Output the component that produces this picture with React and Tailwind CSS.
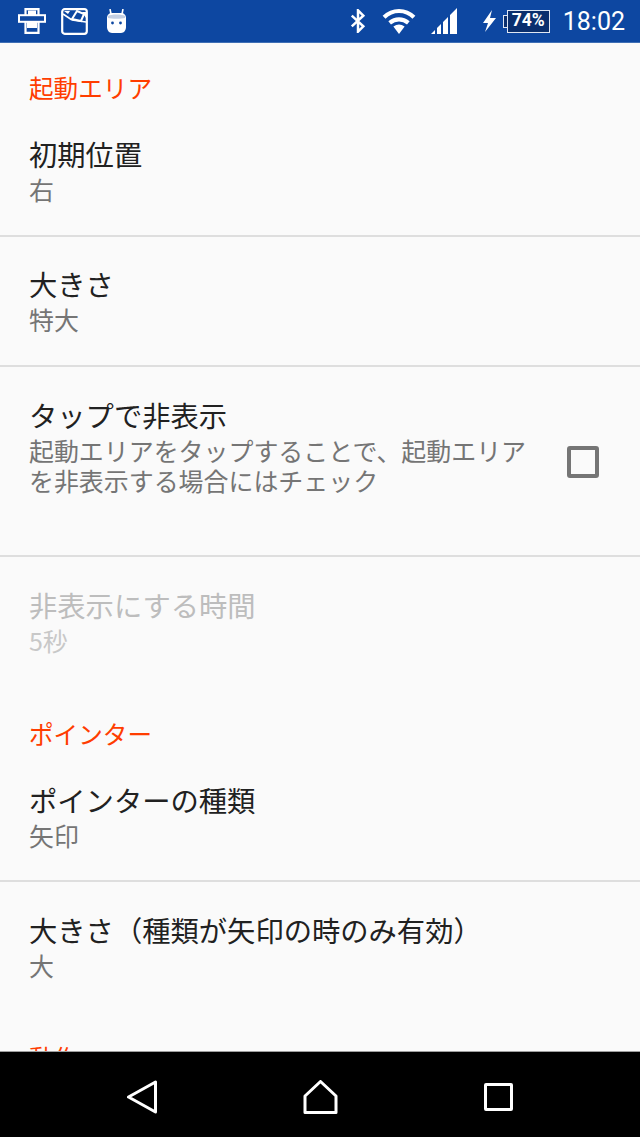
const jp = { fontFamily: '"Noto Sans CJK JP", sans-serif' }

function SectionHeader({ children, className = "pt-[27px]" }) {
  return (
    <div className={`h-[64px] px-[29px] ${className} text-[24.6px] leading-[36px] text-[#ff3d00]`}>{children}</div>
  )
}

function Row({ title, sub, disabled, divider = true, className = "h-[130px] pt-[30px]", subClass = "mt-[2px]" }) {
  return (
    <div className={`${className} px-[29px] ${divider ? "border-b-2 border-[#dedede]" : ""}`}>
      <div className={`text-[28.3px] leading-[36px] ${disabled ? "text-[#bdbdbd]" : "text-[#212121]"}`}>{title}</div>
      <div className={`${subClass} text-[24.95px] leading-[30px] ${disabled ? "text-[#c8c8c8]" : "text-[#757575]"}`}>{sub}</div>
    </div>
  )
}

function StatusBar() {
  return (
    <div className="h-[43px] shrink-0 flex items-center bg-[#0d47a1] border-b border-[#3f6fb5] text-white">
      {/* notification icons */}
      <svg className="ml-[18px]" width="28" height="26" viewBox="0 0 28 26" fill="none">
        <path d="M7.5 7V1.2h13V7M7.5 14v10.8h13V14" stroke="#fff" strokeWidth="2.2" />
        <rect x="1" y="7.2" width="26" height="6.6" stroke="#fff" strokeWidth="2" />
        <path d="M10 2.5h8V7h-8zM9 14h10v6H9z" fill="#fff" />
      </svg>
      <svg className="ml-[15px]" width="27" height="27" viewBox="0 0 27 27" fill="none">
        <rect x="1.2" y="1.2" width="24.6" height="24.6" rx="2.5" stroke="#fff" strokeWidth="2.2" />
        <path d="M2 6l9 6" stroke="#fff" strokeWidth="1.6" />
        <path d="M11 11l5-8 7 3-3 7z" fill="#0d47a1" stroke="#fff" strokeWidth="2" />
        <path d="M11 12l14 2" stroke="#fff" strokeWidth="1.6" />
        <path d="M3 3h6l-2 3zM21 4h4v6z" fill="#fff" />
      </svg>
      <svg className="ml-[18px]" width="21" height="24" viewBox="0 0 21 24" fill="none">
        <path d="M5 5L4 0M16 5l1-5" stroke="#fff" strokeWidth="1.6" />
        <path d="M1 9c0-3 2-5 5-5h9c3 0 5 2 5 5v9c0 3-2 6-5 6H6c-3 0-5-3-5-6z" fill="#fff" />
        <path d="M2 7c3-2 14-2 17 0v2c-3 1-14 1-17 0z" fill="#c3cfe3" />
        <circle cx="6.5" cy="14" r="1.4" fill="#0d47a1" />
        <circle cx="14.5" cy="14" r="1.4" fill="#0d47a1" />
      </svg>

      <div className="ml-auto flex items-center">
        {/* bluetooth */}
        <svg width="16" height="24" viewBox="0 0 18 26" fill="none">
          <path d="M2 7l13 12-6 6V1l6 6L2 19" stroke="#fff" strokeWidth="2.8" />
        </svg>
        {/* wifi */}
        <svg className="ml-[16px]" width="34" height="28" viewBox="0 0 36 30" fill="none">
          <path d="M2 11C11 2 25 2 34 11" stroke="#fff" strokeWidth="4.4" />
          <path d="M8 17c6-5 14-5 20 0" stroke="#fff" strokeWidth="4.4" />
          <path d="M12 21c4-3 8-3 12 0l-6 8z" fill="#fff" />
        </svg>
        {/* signal */}
        <svg className="ml-[14px]" width="28" height="28" viewBox="0 0 28 28">
          <path d="M1 27l4-4v4zM7 27v-6l4-4v10zM13 27V15l5-5v17zM20 27V8l7-7v26z" fill="#fff" />
        </svg>
        {/* charging bolt */}
        <svg className="ml-[24px]" width="15" height="22" viewBox="0 0 15 22">
          <path d="M10 0L1 13h5l-3 9 11-14H8z" fill="#fff" />
        </svg>
        {/* battery */}
        <div className="ml-[6px] flex items-center">
          <div className="w-[4px] h-[13px] border border-r-0 border-[#dfe7f3] bg-[#0a2f6e]" />
          <div className="w-[43px] h-[23px] border-[1.5px] border-[#dfe7f3] bg-[#0a2f6e] flex items-center justify-end pr-[4px] font-['Roboto'] font-bold text-[17.5px] leading-none">
            74%
          </div>
        </div>
        <div className="ml-[13px] mr-[15px] font-['Roboto'] text-[25px] leading-none">18:02</div>
      </div>
    </div>
  )
}

function NavBar() {
  return (
    <div className="h-[86px] shrink-0 bg-black border-t border-[#9e9e9e] flex justify-center items-center pt-[5px]">
      <div className="w-[178px] flex justify-center">
        <svg width="32" height="34" viewBox="0 0 32 34" fill="none">
          <path d="M2.5 17L29.5 2v30z" stroke="#fff" strokeWidth="3" strokeLinejoin="round" />
        </svg>
      </div>
      <div className="w-[178px] flex justify-center">
        <svg width="35" height="34" viewBox="0 0 35 34" fill="none">
          <path d="M17.5 1.5L33 16v16.5H2V16z" stroke="#fff" strokeWidth="3" strokeLinejoin="round" />
        </svg>
      </div>
      <div className="w-[178px] flex justify-center">
        <div className="w-[29px] h-[28px] border-[3px] border-white rounded-[2px]" />
      </div>
    </div>
  )
}

export default function App() {
  return (
    <div className="w-[640px] h-[1137px] flex flex-col bg-[#fafafa] overflow-hidden" style={jp}>
      <StatusBar />
      <div className="flex-1 min-h-0 overflow-hidden">
        <SectionHeader className="pt-[26px]">起動エリア</SectionHeader>
        <Row title="初期位置" sub="右" className="h-[130px] pt-[29px]" />
        <Row title="大きさ" sub="特大" className="h-[130px] pt-[29px]" />
        <div className="h-[190px] flex border-b-2 border-[#dedede] pl-[29px] pr-[41px] pt-[30px]">
          <div className="w-[510px]">
            <div className="text-[28.3px] leading-[36px] text-[#212121]">タップで非表示</div>
            <div className="mt-[2px] text-[24.95px] leading-[30px] text-[#757575]">
              起動エリアをタップすることで、起動エリアを非表示する場合にはチェック
            </div>
          </div>
          <div className="ml-auto mt-[49px] w-[32px] h-[32px] border-[4px] border-[#757575] rounded-[3px]" />
        </div>
        <Row title="非表示にする時間" sub="5秒" disabled divider={false} className="h-[131px] pt-[30px]" />
        <SectionHeader>ポインター</SectionHeader>
        <Row title="ポインターの種類" sub="矢印" />
        <Row title="大きさ（種類が矢印の時のみ有効）" sub="大" divider={false} />
        <SectionHeader>動作</SectionHeader>
      </div>
      <NavBar />
    </div>
  )
}
